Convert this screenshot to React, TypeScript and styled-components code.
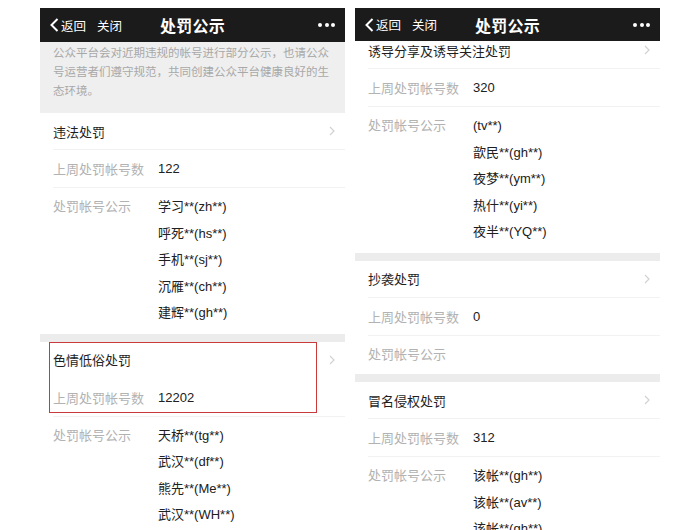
import React from 'react';
import styled, { createGlobalStyle } from 'styled-components';

const GlobalStyle = createGlobalStyle`
  html, body {
    margin: 0;
    padding: 0;
    background: #ffffff;
    overflow: hidden;
  }
  body {
    font-family: "Liberation Sans", "Noto Sans CJK SC", sans-serif;
    -webkit-font-smoothing: antialiased;
  }
`;

interface Section {
  title: string;
  count: string;
  accounts: string[];
  highlight?: boolean;
}

const leftSections: Section[] = [
  { title: '违法处罚', count: '122', accounts: ['学习**(zh**)', '呼死**(hs**)', '手机**(sj**)', '沉雁**(ch**)', '建辉**(gh**)'] },
  { title: '色情低俗处罚', count: '12202', accounts: ['天桥**(tg**)', '武汉**(df**)', '熊先**(Me**)', '武汉**(WH**)'], highlight: true },
];

const rightSections: Section[] = [
  { title: '诱导分享及诱导关注处罚', count: '320', accounts: ['(tv**)', '歆民**(gh**)', '夜梦**(ym**)', '热什**(yi**)', '夜半**(YQ**)'] },
  { title: '抄袭处罚', count: '0', accounts: [] },
  { title: '冒名侵权处罚', count: '312', accounts: ['该帐**(gh**)', '该帐**(av**)', '该帐**(gh**)'] },
];

const Page = styled.div`
  display: flex;
  gap: 10px;
  padding: 8px 40px 0;
  height: 530px;
  box-sizing: border-box;
  overflow: hidden;
`;

const Phone = styled.div`
  width: 305px;
  flex-shrink: 0;
  display: flex;
  flex-direction: column;
  background: #ffffff;
  overflow: hidden;
`;

const NavBar = styled.div<{ $h: number }>`
  height: ${(p) => p.$h}px;
  flex-shrink: 0;
  background: #1b1b1b;
  color: #ffffff;
  display: grid;
  grid-template-columns: 1fr auto 1fr;
  align-items: center;
  padding: 0 10px;
  position: relative;
  z-index: 1;
`;

const NavLeft = styled.div`
  display: flex;
  align-items: center;
  font-size: 12.5px;
  gap: 11px;
`;

const Back = styled.span`
  display: flex;
  align-items: center;
  gap: 2px;
`;

const NavTitle = styled.div`
  font-size: 16px;
  font-weight: bold;
  letter-spacing: 0.3px;
`;

const Dots = styled.div`
  display: flex;
  justify-content: flex-end;
  gap: 2.5px;
`;

const Dot = styled.span`
  width: 4px;
  height: 4px;
  border-radius: 50%;
  background: #ffffff;
`;

const Screen = styled.div`
  flex: 1;
  overflow: hidden;
`;

const Content = styled.div<{ $scroll: number }>`
  margin-top: ${(p) => -p.$scroll}px;
`;

const Intro = styled.div`
  background: #efefef;
  color: #a8a8a8;
  font-size: 11.5px;
  line-height: 19px;
  padding: 2px 13px 12px;
`;

const Gap = styled.div`
  height: 8px;
  background: #ececec;
`;

const TitleRow = styled.div`
  height: 36px;
  display: flex;
  align-items: center;
  justify-content: space-between;
  padding: 0 10px 0 13px;
  font-size: 13px;
  color: #1e1e1e;
`;

const Divider = styled.div<{ $hidden?: boolean }>`
  height: 1px;
  margin-left: 13px;
  background: ${(p) => (p.$hidden ? 'transparent' : '#f2f2f2')};
`;

const StatRow = styled.div`
  height: 37px;
  display: grid;
  grid-template-columns: 105px 1fr;
  align-items: center;
  padding: 0 13px;
  font-size: 13px;
`;

const Label = styled.span`
  color: #b2b2b2;
`;

const Value = styled.span`
  color: #202020;
`;

const ListRow = styled.div<{ $empty: boolean }>`
  display: grid;
  grid-template-columns: 105px 1fr;
  padding: ${(p) => (p.$empty ? '6px 13px 6px' : '6px 13px 7px')};
  font-size: 13px;
  line-height: 26.5px;
`;

const Accounts = styled.div`
  display: flex;
  flex-direction: column;
  color: #202020;
`;

const Highlight = styled.div`
  position: relative;
  &::after {
    content: '';
    position: absolute;
    top: 0;
    left: 9px;
    right: 28px;
    bottom: 3px;
    border: 1.5px solid #c93a3c;
    pointer-events: none;
  }
`;

const Chevron = () => (
  <svg width="6" height="10" viewBox="0 0 6 10">
    <polyline points="1,1 5,5 1,9" fill="none" stroke="#d2d2d2" strokeWidth="1.2" />
  </svg>
);

const BackArrow = () => (
  <svg width="9" height="14" viewBox="0 0 9 14">
    <polyline points="7.5,1 1.5,7 7.5,13" fill="none" stroke="#ffffff" strokeWidth="2" />
  </svg>
);

const Header: React.FC<{ height: number }> = ({ height }) => (
  <NavBar $h={height}>
    <NavLeft>
      <Back><BackArrow />返回</Back>
      <span>关闭</span>
    </NavLeft>
    <NavTitle>处罚公示</NavTitle>
    <Dots><Dot /><Dot /><Dot /></Dots>
  </NavBar>
);

const SectionBlock: React.FC<{ s: Section }> = ({ s }) => {
  const head = (
    <>
      <TitleRow>
        <span>{s.title}</span>
        <Chevron />
      </TitleRow>
      <Divider $hidden={s.highlight} />
      <StatRow>
        <Label>上周处罚帐号数</Label>
        <Value>{s.count}</Value>
      </StatRow>
    </>
  );
  return (
    <>
      {s.highlight ? <Highlight>{head}</Highlight> : head}
      <Divider />
      <ListRow $empty={s.accounts.length === 0}>
        <Label>处罚帐号公示</Label>
        <Accounts>
          {s.accounts.map((a, i) => (
            <span key={i}>{a}</span>
          ))}
        </Accounts>
      </ListRow>
    </>
  );
};

const SectionList: React.FC<{ sections: Section[] }> = ({ sections }) => (
  <>
    {sections.map((s, i) => (
      <React.Fragment key={i}>
        {i > 0 && <Gap />}
        <SectionBlock s={s} />
      </React.Fragment>
    ))}
  </>
);

export default function App() {
  return (
    <>
      <GlobalStyle />
      <Page>
        <Phone>
          <Header height={34} />
          <Screen>
            <Content $scroll={0}>
              <Intro>
                公众平台会对近期违规的帐号进行部分公示，也请公众号运营者们遵守规范，共同创建公众平台健康良好的生态环境。
              </Intro>
              <SectionList sections={leftSections} />
            </Content>
          </Screen>
        </Phone>
        <Phone>
          <Header height={33} />
          <Screen>
            <Content $scroll={9}>
              <SectionList sections={rightSections} />
            </Content>
          </Screen>
        </Phone>
      </Page>
    </>
  );
}
